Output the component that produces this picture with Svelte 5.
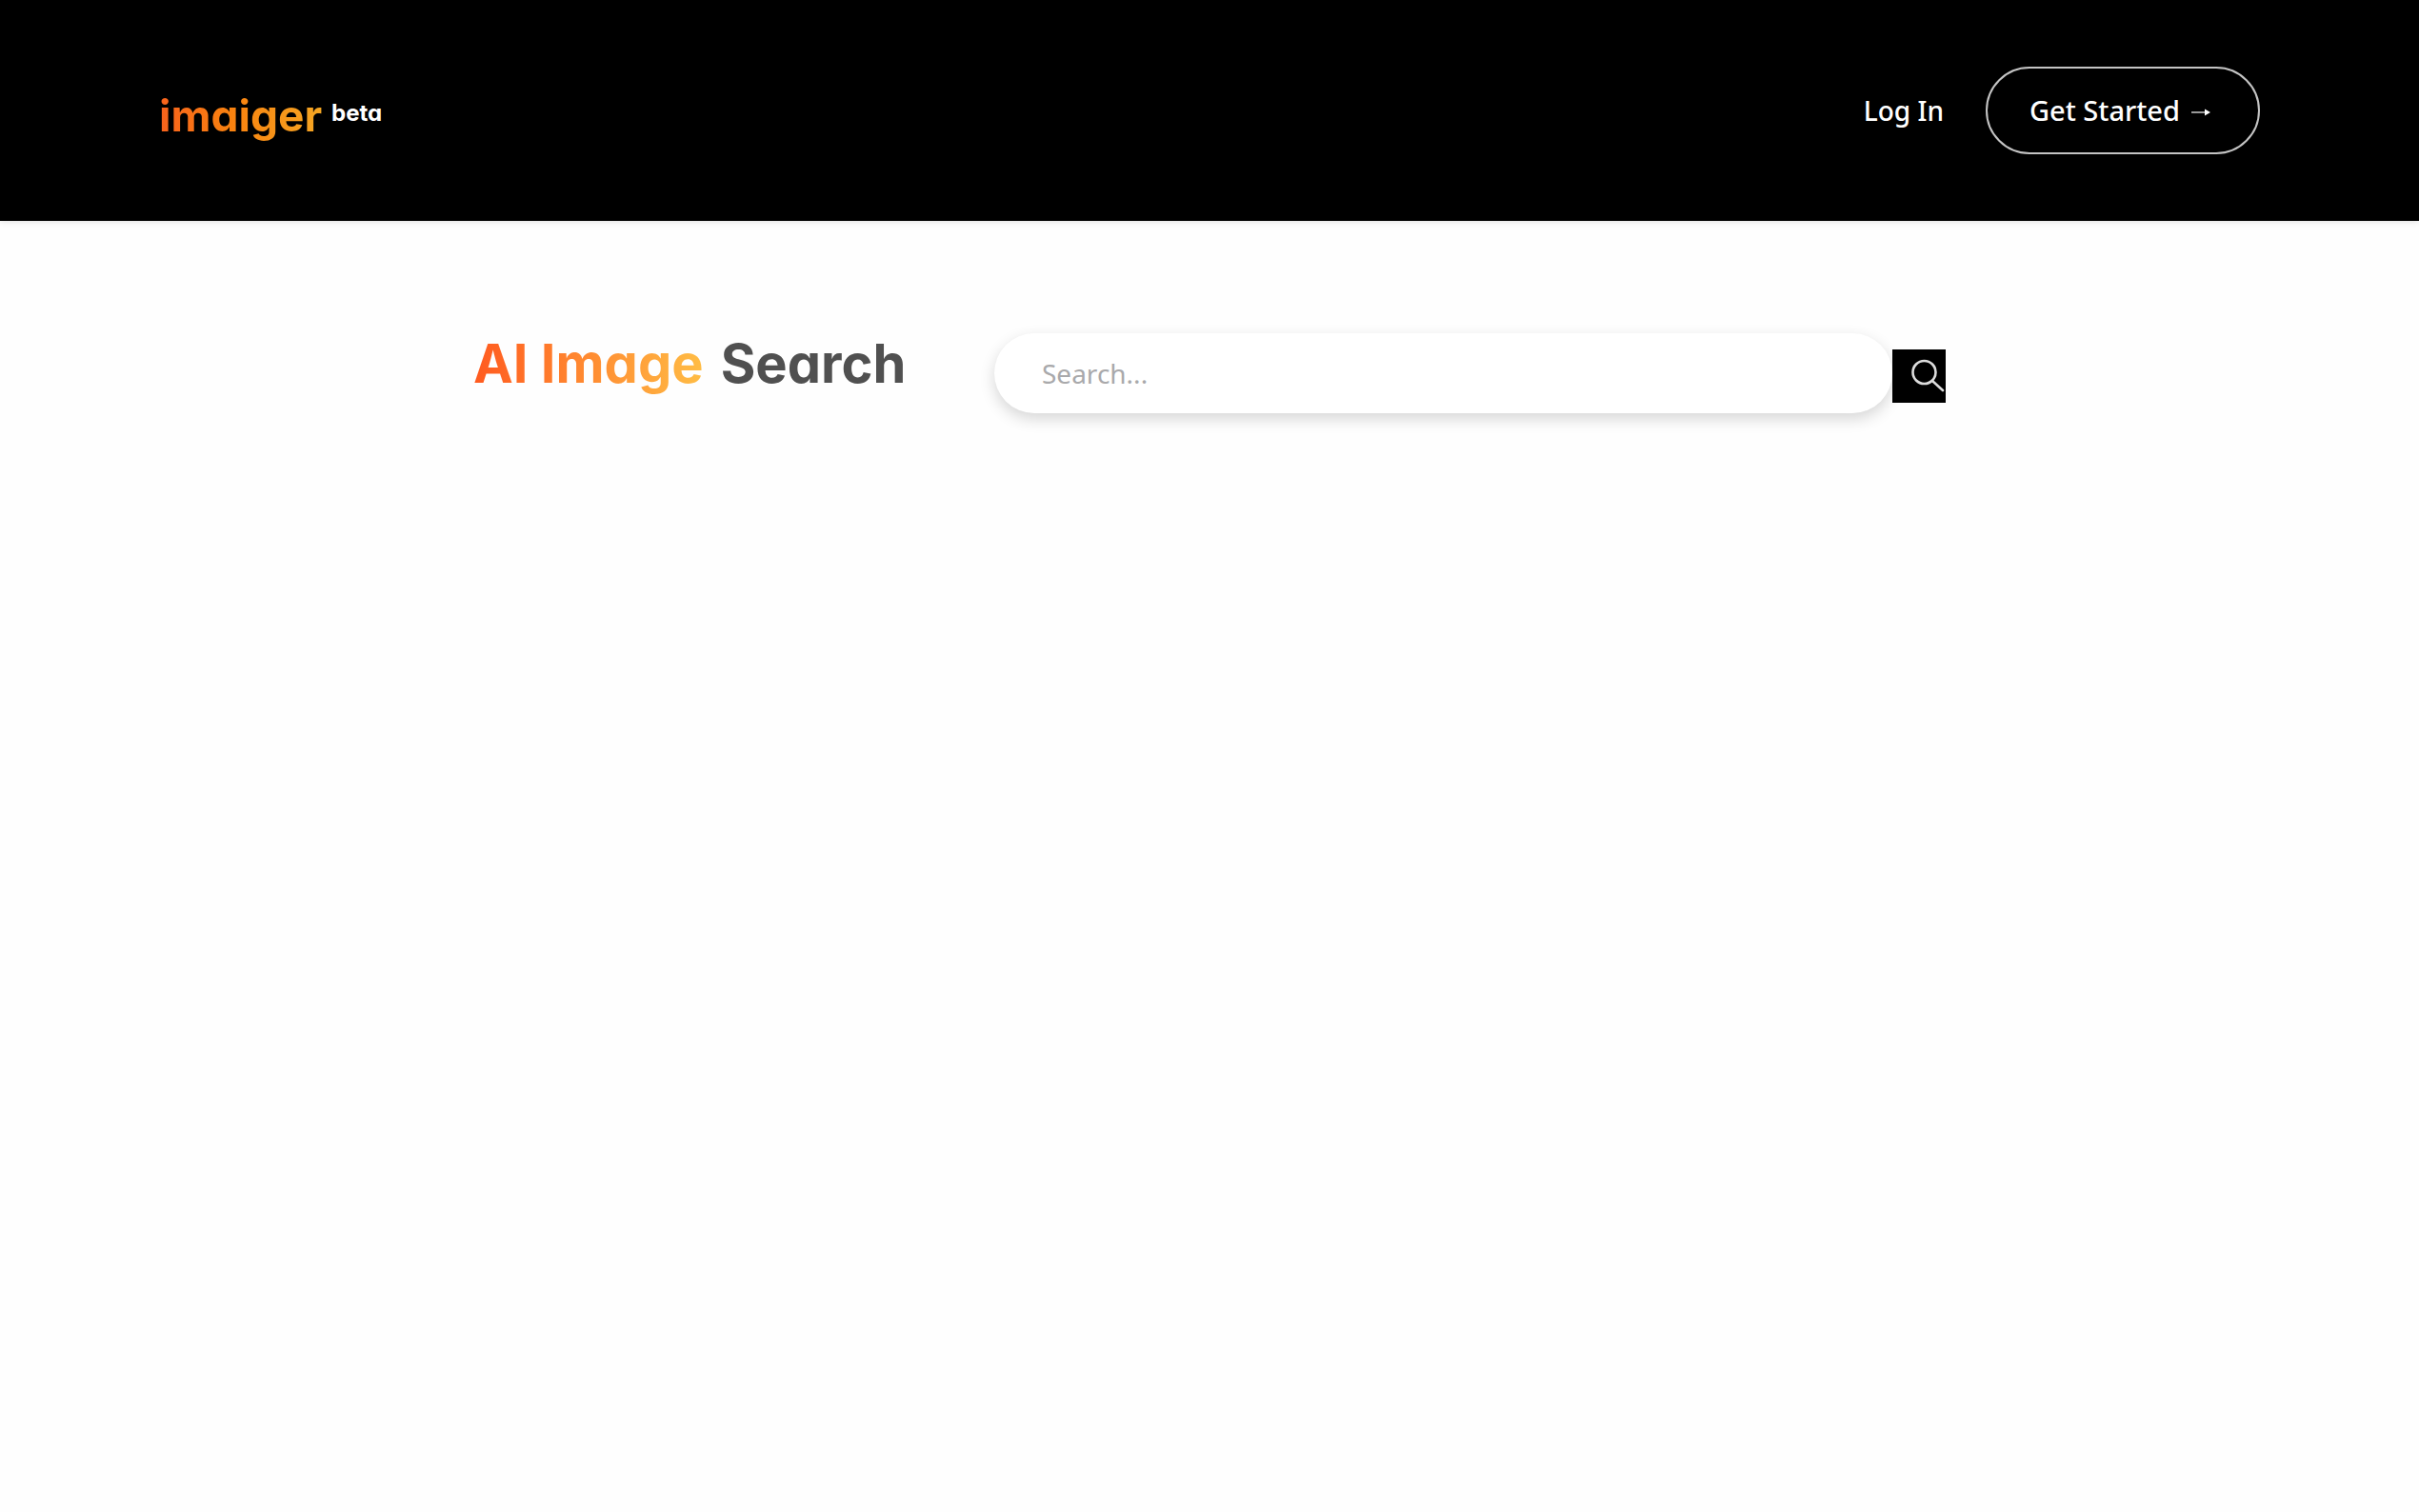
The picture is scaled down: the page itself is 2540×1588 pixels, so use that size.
<script>
  let query = $state('');
</script>

<header>
  <a class="logo" href="/"><span class="brand">imaiger</span><span class="beta">beta</span></a>
  <nav>
    <a class="login" href="/login">Log In</a>
    <a class="start" href="/signup">Get Started <svg viewBox="0 0 20 8" aria-hidden="true"><path d="M0 4H16" stroke="currentColor" stroke-width="1.2" /><path d="M14 0.5L20 4L14 7.5Z" fill="currentColor" /></svg></a>
  </nav>
</header>

<main>
  <h1><span class="accent">AI Image</span><span class="plain">Search</span></h1>
  <form role="search" onsubmit={(e) => e.preventDefault()}>
    <input type="search" aria-label="Search images" placeholder="Search..." bind:value={query} />
    <button type="submit" aria-label="Search">
      <svg viewBox="0 0 56 56" aria-hidden="true">
        <circle cx="33.5" cy="24" r="12" />
        <path d="M42 33L53 43" />
      </svg>
    </button>
  </form>
</main>

<style>
  :global(body) {
    background: #fefefe;
    font-family: 'Noto Sans', sans-serif;
  }

  header {
    display: flex;
    align-items: center;
    justify-content: space-between;
    padding: 70px 167px;
    background: #000;
    box-shadow: 0 1px 6px rgba(0, 0, 0, 0.12);
  }

  a {
    color: #fff;
    text-decoration: none;
  }

  .logo {
    display: flex;
    align-items: center;
    font-family: Inter, sans-serif;
    font-feature-settings: 'cv11';
    font-weight: 700;
  }

  .brand {
    padding-top: 10px;
    font-size: 46px;
    line-height: 64px;
    background: linear-gradient(90deg, #f8621c, #f9820f 45%, #f5a623);
    background-clip: text;
    color: transparent;
  }

  .beta {
    margin-left: 10px;
    padding-top: 6px;
    font-size: 24px;
    line-height: 32px;
  }

  nav {
    display: flex;
    align-items: center;
    gap: 44px;
    font-size: 28px;
    font-weight: 500;
    line-height: 40px;
  }

  .start {
    display: flex;
    align-items: center;
    gap: 12px;
    padding: 24px 50px 24px 44px;
    border: 2px solid #c4c4c4;
    border-radius: 46px;
    font-size: 29px;
  }

  .login,
  .start {
    font-weight: 550;
  }

  .start svg {
    width: 20px;
    height: 8px;
    margin-top: 4px;
  }

  main {
    display: flex;
    box-sizing: border-box;
    width: 100%;
    max-width: 1546px;
    margin: 0 auto;
    padding: 118px 0;
  }

  h1 {
    flex: 0 0 547px;
    margin: 0;
    color: #505050;
    font-family: Inter, sans-serif;
    font-feature-settings: 'cv11';
    font-size: 56px;
    font-weight: 700;
    line-height: 64px;
    white-space: nowrap;
  }

  .accent {
    background: linear-gradient(90deg, #ff5a1f, #ffbd45);
    background-clip: text;
    color: transparent;
  }

  .plain {
    margin-left: 18px;
  }

  form {
    display: flex;
    flex: 1;
    align-items: center;
    min-width: 0;
  }

  input {
    flex: 1;
    box-sizing: border-box;
    min-width: 0;
    height: 84px;
    padding: 0 50px;
    border: 0;
    border-radius: 42px;
    background: #fff;
    box-shadow: 0 6px 16px rgba(0, 0, 0, 0.16);
    color: #505050;
    font: 28px 'Noto Sans', sans-serif;
  }

  input::placeholder {
    color: #a9a9ab;
    opacity: 1;
  }

  button {
    display: block;
    width: 56px;
    height: 56px;
    margin-top: 6px;
    padding: 0;
    border: 0;
    background: #000;
    cursor: pointer;
  }

  button svg {
    display: block;
    fill: none;
    stroke: #dcdcdc;
    stroke-width: 2.6;
    stroke-linecap: round;
  }
</style>
